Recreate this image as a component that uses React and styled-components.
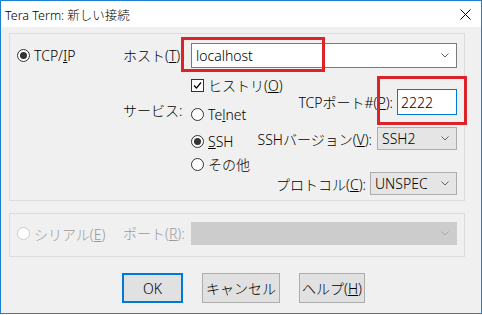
import React from 'react'
import styled, { createGlobalStyle } from 'styled-components'

const GlobalStyle = createGlobalStyle`
  html, body {
    margin: 0;
    padding: 0;
    background: #ffffff;
  }
  body {
    font-family: "Noto Sans", "Noto Sans CJK JP", sans-serif;
  }
`

const Window = styled.div`
  width: 482px;
  height: 314px;
  box-sizing: border-box;
  border: 1px solid #1c7fd6;
  background: #f0f0f0;
  display: flex;
  flex-direction: column;
  font-size: 14px;
  font-weight: 300;
  color: #000;
`

const TitleBar = styled.div`
  height: 26px;
  flex: none;
  background: #ffffff;
  display: flex;
  align-items: center;
  justify-content: space-between;
  padding: 0 10px 0 4px;
  font-size: 12.5px;
`

const Body = styled.div`
  padding: 6px 0 0 8px;
  display: flex;
  flex-direction: column;
`

const Group = styled.div`
  width: 456px;
  height: ${p => p.h}px;
  box-sizing: border-box;
  border: 1px solid #dcdcdc;
  padding-top: ${p => p.pt}px;
  margin-top: ${p => p.mt || 0}px;
`

const FieldRow = styled.div`
  display: grid;
  grid-template-columns: 113px 68px 266px;
  align-items: ${p => p.align || 'center'};
`

const Label = styled.span`
  white-space: nowrap;
  color: ${p => (p.disabled ? '#9a9a9a' : '#000')};
  margin-top: ${p => p.mt || 0}px;
  line-height: 20px;
`

const Option = styled.label`
  display: flex;
  align-items: center;
  gap: 4px;
  height: ${p => p.h || 20}px;
  margin-top: ${p => p.mt || 0}px;
  padding-left: ${p => p.pl || 0}px;
  white-space: nowrap;
  color: ${p => (p.disabled ? '#9a9a9a' : '#000')};
`

const RadioMark = styled.span`
  width: 13px;
  height: 13px;
  box-sizing: border-box;
  flex: none;
  border-radius: 50%;
  border: 1px solid ${p => (p.disabled ? '#cccccc' : '#333333')};
  background: #ffffff;
  display: flex;
  align-items: center;
  justify-content: center;
  &::after {
    content: '';
    display: ${p => (p.checked ? 'block' : 'none')};
    width: 7px;
    height: 7px;
    border-radius: 50%;
    background: #333333;
  }
`

const CheckMark = styled.span`
  width: 13px;
  height: 13px;
  box-sizing: border-box;
  flex: none;
  border: 1px solid #333333;
  background: #ffffff;
  display: flex;
  align-items: center;
  justify-content: center;
`

const Annotated = styled.div`
  position: relative;
`

const RedBox = styled.div`
  position: absolute;
  left: ${p => p.l}px;
  top: ${p => p.t}px;
  width: ${p => p.w}px;
  height: ${p => p.h}px;
  box-sizing: border-box;
  border: 3px solid #dc2328;
  pointer-events: none;
`

const Combo = styled.div`
  width: ${p => p.w}px;
  height: ${p => p.h}px;
  box-sizing: border-box;
  border: 1px solid ${p => (p.variant === 'edit' ? '#7a7a7a' : p.variant === 'disabled' ? '#cccccc' : '#adadad')};
  background: ${p => (p.variant === 'edit' ? '#ffffff' : p.variant === 'disabled' ? '#cccccc' : '#e5e5e5')};
  display: flex;
  align-items: center;
  justify-content: space-between;
  padding: 0 7px 0 4px;
  white-space: nowrap;
`

const Chevron = ({ color = '#606060' }) => (
  <svg width="8" height="5" viewBox="0 0 8 5">
    <path d="M0.5 0.5 L4 4 L7.5 0.5" fill="none" stroke={color} strokeWidth="1" />
  </svg>
)

const Input = styled.div`
  width: 60px;
  height: 26px;
  box-sizing: border-box;
  border: 1px solid #0078d7;
  background: #ffffff;
  display: flex;
  align-items: center;
  padding-left: 3px;
`

const ServiceBody = styled.div`
  display: flex;
`

const LeftStack = styled.div`
  width: 57px;
  display: flex;
  flex-direction: column;
  flex: none;
`

const RightStack = styled.div`
  flex: 1;
  display: flex;
  flex-direction: column;
  align-items: flex-end;
`

const SettingRow = styled.div`
  display: flex;
  align-items: center;
  gap: ${p => p.gap || 4}px;
  margin-top: ${p => p.mt}px;
  white-space: nowrap;
`

const ButtonRow = styled.div`
  display: flex;
  gap: 19px;
  margin-top: 16px;
  padding-left: 113px;
`

const Button = styled.div`
  width: ${p => p.w}px;
  height: 30px;
  box-sizing: border-box;
  border: ${p => (p.primary ? '2px solid #0078d7' : '1px solid #adadad')};
  background: #e1e1e1;
  display: flex;
  align-items: center;
  justify-content: center;
  white-space: nowrap;
`

const Radio = ({ checked, disabled, children, ...rest }) => (
  <Option disabled={disabled} {...rest}>
    <RadioMark checked={checked} disabled={disabled} />
    <span>{children}</span>
  </Option>
)

export default function App() {
  return (
    <>
      <GlobalStyle />
      <Window>
        <TitleBar>
          <span>Tera Term: 新しい接続</span>
          <svg width="11" height="11" viewBox="0 0 11 11">
            <path d="M0.5 0.5 L10.5 10.5 M10.5 0.5 L0.5 10.5" stroke="#000" strokeWidth="1" />
          </svg>
        </TitleBar>
        <Body>
          <Group h={168} pt={9}>
            <FieldRow>
              <Radio checked pl={7}>
                TCP/<u>I</u>P
              </Radio>
              <Label>
                ホスト(<u>T</u>):
              </Label>
              <Annotated>
                <Combo variant="edit" w={266} h={25}>
                  <span>localhost</span>
                  <Chevron />
                </Combo>
                <RedBox l={-10} t={-6} w={144} h={35} />
              </Annotated>
            </FieldRow>
            <FieldRow align="start">
              <span />
              <Label mt={33}>サービス:</Label>
              <ServiceBody>
                <LeftStack>
                  <Option h={14} mt={10}>
                    <CheckMark>
                      <svg width="9" height="9" viewBox="0 0 9 9">
                        <path d="M1 4.5 L3.5 7 L8 1.5" fill="none" stroke="#000" strokeWidth="1.2" />
                      </svg>
                    </CheckMark>
                    <span>
                      ヒストリ(<u>O</u>)
                    </span>
                  </Option>
                  <Radio mt={12}>
                    Te<u>l</u>net
                  </Radio>
                  <Radio checked mt={7}>
                    <u>S</u>SH
                  </Radio>
                  <Radio mt={3}>その他</Radio>
                </LeftStack>
                <RightStack>
                  <SettingRow mt={21}>
                    <span>
                      TCPポート#(<u>P</u>):
                    </span>
                    <Annotated>
                      <Input>2222</Input>
                      <RedBox l={-20} t={-13} w={90} h={49} />
                    </Annotated>
                  </SettingRow>
                  <SettingRow mt={12} gap={5}>
                    <span>
                      SSHバージョン(<u>V</u>):
                    </span>
                    <Combo w={80} h={23}>
                      <span>SSH2</span>
                      <Chevron />
                    </Combo>
                  </SettingRow>
                  <SettingRow mt={22}>
                    <span>
                      プロトコル(<u>C</u>):
                    </span>
                    <Combo w={87} h={23}>
                      <span>UNSPEC</span>
                      <Chevron />
                    </Combo>
                  </SettingRow>
                </RightStack>
              </ServiceBody>
            </FieldRow>
          </Group>
          <Group h={44} pt={8} mt={12}>
            <FieldRow>
              <Radio disabled pl={7}>
                シリアル(<u>E</u>)
              </Radio>
              <Label disabled>
                ポート(<u>R</u>):
              </Label>
              <Combo variant="disabled" w={266} h={23}>
                <span />
                <Chevron color="#a8a8a8" />
              </Combo>
            </FieldRow>
          </Group>
          <ButtonRow>
            <Button primary w={61}>OK</Button>
            <Button w={78}>キャンセル</Button>
            <Button w={66}>
              ヘルプ(<u>H</u>)
            </Button>
          </ButtonRow>
        </Body>
      </Window>
    </>
  )
}
